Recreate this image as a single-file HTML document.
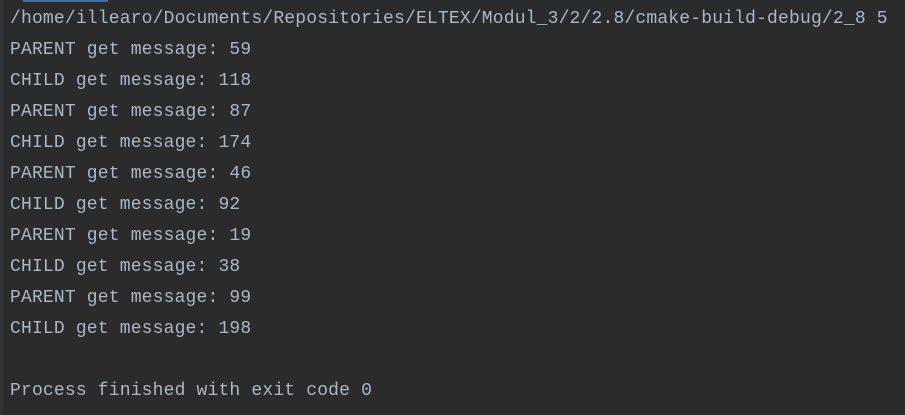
<!DOCTYPE html>
<html><head><style>
html,body{margin:0;padding:0;}
body{width:905px;height:415px;background:#2b2b2b;position:relative;overflow:hidden;}
.g{position:absolute;left:0;top:0;width:3px;height:415px;background:#313335;}
.bar{position:absolute;left:23px;top:0;width:85px;height:2px;background:#3d6ea8;}
pre{margin:0;position:absolute;left:10px;top:4px;font-family:"Liberation Mono",monospace;font-size:18px;line-height:31px;letter-spacing:0.17px;color:#a9b7c6;}
</style></head><body>
<div class="g"></div><div class="bar"></div>
<pre>/home/illearo/Documents/Repositories/ELTEX/Modul_3/2/2.8/cmake-build-debug/2_8 5
PARENT get message: 59
CHILD get message: 118
PARENT get message: 87
CHILD get message: 174
PARENT get message: 46
CHILD get message: 92
PARENT get message: 19
CHILD get message: 38
PARENT get message: 99
CHILD get message: 198

Process finished with exit code 0</pre>
</body></html>
